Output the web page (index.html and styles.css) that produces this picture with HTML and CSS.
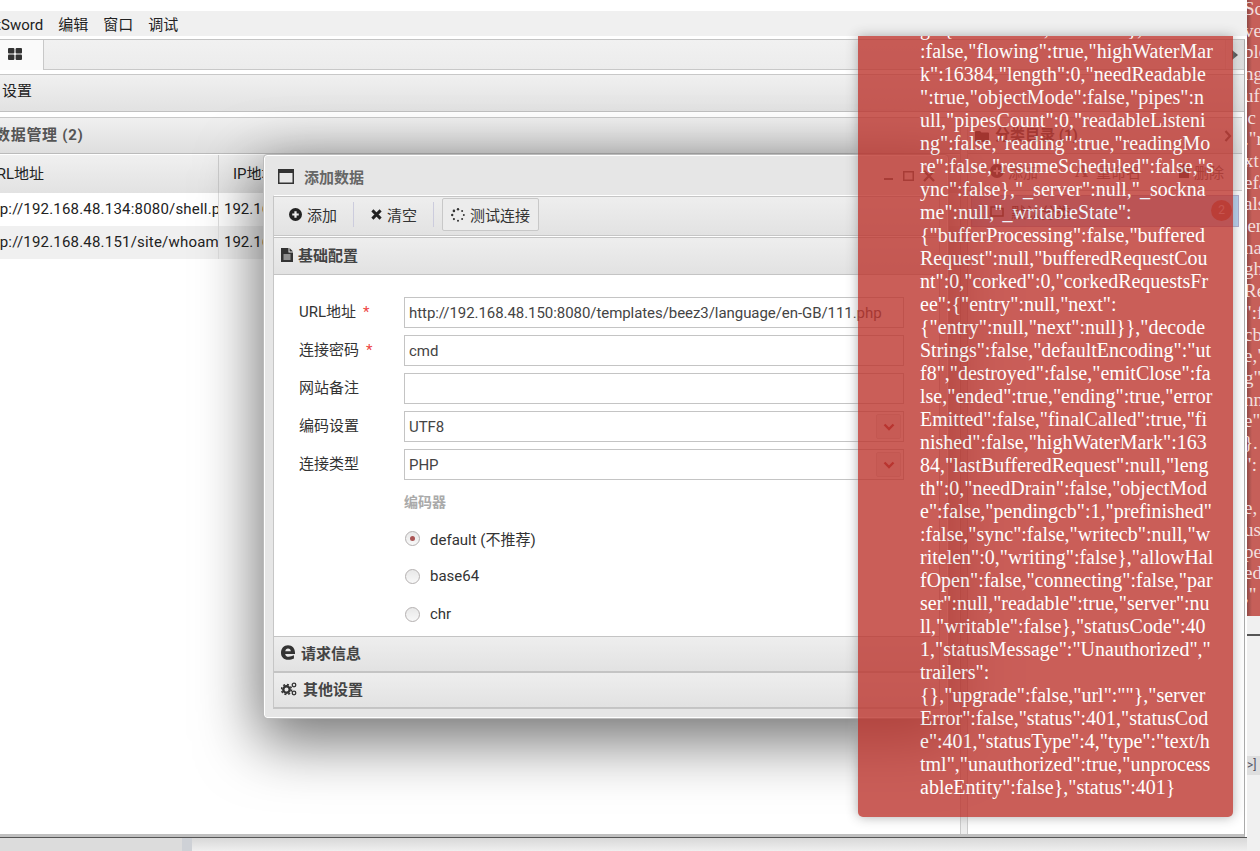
FILE: index.html
```html
<!DOCTYPE html>
<html lang="zh">
<head>
<meta charset="utf-8">
<title>AntSword</title>
<link rel="stylesheet" href="styles.css">
</head>
<body>
<div class="stage">
  <div class="back-toast"><div class="back-text">Sc<br>ve<br>ble<br>ng<br>ufi<br>'c<br>."r<br>xt<br>efa<br>als<br>'en<br>na<br>gh<br>Re<br>":f<br>cb<br>e,"<br>g"<br>nn<br>e"<br>}.<br>":<br><br>e,<br>us<br>pe<br>ed<br>,"</div></div>
  <div class="back-line"></div>
  <div class="back-term">&gt;]</div>
  <div class="task-strip"></div>

  <div class="app">
    <div class="menu"><span>AntSword</span><span>编辑</span><span>窗口</span><span>调试</span></div>
    <div class="frame">
      <div class="tabs">
        <div class="tab">
          <svg class="i-grid" width="14" height="12" viewBox="0 0 14 12"><rect width="6.4" height="5.4" rx="1"/><rect x="7.6" width="6.4" height="5.4" rx="1"/><rect y="6.6" width="6.4" height="5.4" rx="1"/><rect x="7.6" y="6.6" width="6.4" height="5.4" rx="1"/></svg>
        </div>
        <div class="tab-arrow"><i></i></div>
      </div>
      <div class="toolbar main-tools"><span>设置</span></div>
      <div class="panes">
        <div class="pane-left">
          <div class="head head-left">数据管理 (2)</div>
          <div class="grid">
            <div class="row row-head"><div class="c1">URL地址</div><div class="c2">IP地址</div></div>
            <div class="row"><div class="c1">http://192.168.48.134:8080/shell.php</div><div class="c2">192.168.48.134</div></div>
            <div class="row row-alt"><div class="c1">http://192.168.48.151/site/whoami.php</div><div class="c2">192.168.48.151</div></div>
          </div>
        </div>
        <div class="splitter"></div>
        <div class="pane-right">
          <div class="head head-right">
            <svg width="14" height="12" viewBox="0 0 14 12"><path d="M0 2a1 1 0 0 1 1-1h4l1.500 1.500H13a1 1 0 0 1 1 1V11a1 1 0 0 1-1 1H1a1 1 0 0 1-1-1z"/></svg>
            <span>分类目录 (1)</span>
            <svg class="chev" width="8" height="12" viewBox="0 0 8 12"><path d="M1.500 1l4.500 5-4.500 5" fill="none" stroke="currentColor" stroke-width="2.200"/></svg>
          </div>
          <div class="cat-tools">
            <span class="ct"><svg width="14" height="14" viewBox="0 0 14 14"><circle cx="7" cy="7" r="7"/><path d="M7 3.500v7M3.500 7h7" stroke="#eee" stroke-width="2"/></svg>添加</span>
            <span class="ct"><b class="ct-a">A</b>重命名</span>
            <span class="ct"><svg width="12" height="14" viewBox="0 0 12 14"><path d="M0 2h12v1.500H0zM4 0h4v2H4zM1 4h10v10H1z"/></svg>删除</span>
          </div>
          <div class="cat-row">
            <svg width="14" height="12" viewBox="0 0 14 12"><path d="M1 2h4l1.500 1.500H13V11H1z" fill="none" stroke="currentColor" stroke-width="1.500"/></svg>
            <span>默认分类</span>
            <em class="badge">2</em>
          </div>
        </div>
      </div>
    </div>
  </div>

  <div class="dialog">
    <div class="dlg-title">
      <svg width="16" height="15" viewBox="0 0 16 15"><path d="M0 0h16v15H0z" fill="#333"/><path d="M1.500 4h13v9.500h-13z" fill="#e8e8e8"/></svg>
      <span class="dlg-name">添加数据</span>
      <span class="win-btns">
        <svg width="10" height="10" viewBox="0 0 10 10"><path d="M0 7h9v2H0z"/></svg>
        <svg width="11" height="10" viewBox="0 0 11 10"><path d="M.75.75h9.500v8.500H.75z" fill="none" stroke="currentColor" stroke-width="1.500"/></svg>
        <svg width="12" height="12" viewBox="0 0 12 12"><path d="M1 1l10 10M11 1L1 11" stroke="currentColor" stroke-width="2.400"/></svg>
      </span>
    </div>
    <div class="dlg-body">
      <div class="dlg-tools">
        <span class="tbtn"><svg width="13" height="13" viewBox="0 0 14 14"><circle cx="7" cy="7" r="7" fill="#222"/><path d="M7 3.500v7M3.500 7h7" stroke="#eee" stroke-width="2.400"/></svg>添加</span>
        <i class="sep"></i>
        <span class="tbtn"><svg width="11" height="11" viewBox="0 0 12 12"><path d="M1.500 1.500l9 9M10.500 1.500l-9 9" stroke="#222" stroke-width="3.200"/></svg>清空</span>
        <i class="sep"></i>
        <span class="tbtn tbtn-box"><svg width="14" height="14" viewBox="0 0 14 14" fill="#333"><circle cx="7" cy="1.200" r="1.200"/><circle cx="11.100" cy="2.900" r="1"/><circle cx="12.800" cy="7" r="1"/><circle cx="11.100" cy="11.100" r="1"/><circle cx="7" cy="12.800" r="1"/><circle cx="2.900" cy="11.100" r="1.100"/><circle cx="1.200" cy="7" r="1.200"/><circle cx="2.900" cy="2.900" r="1.300"/></svg>测试连接</span>
      </div>
      <div class="acc-head acc-first">
        <svg width="12" height="14" viewBox="0 0 12 14"><path d="M0 0h7.500v4.500H12V14H0z" fill="#333"/><path d="M8.500 0L12 3.500H8.500z" fill="#333"/><path d="M2.500 7h7M2.500 9h7M2.500 11h7" stroke="#eee"/></svg>
        <span>基础配置</span>
      </div>
      <div class="form">
        <div class="frow"><label>URL地址<em>*</em></label><div class="field"><input type="text" value="http://192.168.48.150:8080/templates/beez3/language/en-GB/111.php"></div></div>
        <div class="frow"><label>连接密码<em>*</em></label><div class="field"><input type="text" value="cmd"></div></div>
        <div class="frow"><label>网站备注</label><div class="field"><input type="text" value=""></div></div>
        <div class="frow"><label>编码设置</label><div class="field"><input type="text" value="UTF8"><span class="drop"><svg width="12" height="8" viewBox="0 0 12 8"><path d="M1.500 1.500L6 6l4.500-4.500" fill="none" stroke="#a33" stroke-width="2.400"/></svg></span></div></div>
        <div class="frow"><label>连接类型</label><div class="field"><input type="text" value="PHP"><span class="drop"><svg width="12" height="8" viewBox="0 0 12 8"><path d="M1.500 1.500L6 6l4.500-4.500" fill="none" stroke="#a33" stroke-width="2.400"/></svg></span></div></div>
        <div class="enc-title">编码器</div>
        <div class="radio radio-on"><i></i>default (不推荐)</div>
        <div class="radio"><i></i>base64</div>
        <div class="radio"><i></i>chr</div>
      </div>
      <div class="acc-head">
        <svg width="14" height="15" viewBox="1 1 12 12.500"><path d="M1 7.500C1 3.500 3.500 1 7 1c3.700 0 6 2.500 6 6.500v1H4.600c.2 1.600 1.200 2.400 2.900 2.400 1.500 0 3-.4 4.600-1.200v2.700c-1.500.7-3 1.100-4.900 1.100C3.300 13.500 1 11.200 1 7.500zm3.700-1.400h4.700C9.300 4.700 8.400 3.800 7 3.800c-1.300 0-2.100.9-2.300 2.300z" fill="#333"/></svg>
        <span>请求信息</span>
      </div>
      <div class="acc-head">
        <svg width="16" height="14" viewBox="0 0 16 14"><circle cx="5.500" cy="7.500" r="3.200" fill="none" stroke="#333" stroke-width="2.400"/><circle cx="5.500" cy="7.500" r="5" fill="none" stroke="#333" stroke-width="1.600" stroke-dasharray="2 1.900"/><circle cx="13" cy="3" r="1.800" fill="none" stroke="#333" stroke-width="1.300"/><circle cx="13" cy="11" r="1.800" fill="none" stroke="#333" stroke-width="1.300"/></svg>
        <span>其他设置</span>
      </div>
    </div>
  </div>

  <div class="toast"><div class="toast-msg">g":{"head":null,"tail":null},<br>:false,"flowing":true,"highWaterMar<br>k":16384,"length":0,"needReadable<br>":true,"objectMode":false,"pipes":n<br>ull,"pipesCount":0,"readableListeni<br>ng":false,"reading":true,"readingMo<br>re":false,"resumeScheduled":false,"s<br>ync":false},"_server":null,"_sockna<br>me":null,"_writableState":<br>{"bufferProcessing":false,"buffered<br>Request":null,"bufferedRequestCou<br>nt":0,"corked":0,"corkedRequestsFr<br>ee":{"entry":null,"next":<br>{"entry":null,"next":null}},"decode<br>Strings":false,"defaultEncoding":"ut<br>f8","destroyed":false,"emitClose":fa<br>lse,"ended":true,"ending":true,"error<br>Emitted":false,"finalCalled":true,"fi<br>nished":false,"highWaterMark":163<br>84,"lastBufferedRequest":null,"leng<br>th":0,"needDrain":false,"objectMod<br>e":false,"pendingcb":1,"prefinished"<br>:false,"sync":false,"writecb":null,"w<br>ritelen":0,"writing":false},"allowHal<br>fOpen":false,"connecting":false,"par<br>ser":null,"readable":true,"server":nu<br>ll,"writable":false},"statusCode":40<br>1,"statusMessage":"Unauthorized","<br>trailers":<br>{},"upgrade":false,"url":""},"server<br>Error":false,"status":401,"statusCod<br>e":401,"statusType":4,"type":"text/h<br>tml","unauthorized":true,"unprocess<br>ableEntity":false},"status":401}</div></div>
</div>
</body>
</html>
```

FILE: styles.css
```css
* { box-sizing: border-box; }
html, body { margin: 0; height: 100%; overflow: hidden; }
body {
  background: #f0f0f0;
  font-family: Roboto, "Noto Sans CJK SC", sans-serif;
  font-size: 15px;
  color: #222;
}
.stage { position: relative; width: 1260px; height: 851px; overflow: hidden; }

/* what lies behind the main window */
.back-toast {
  position: absolute; left: 1247px; top: 0; width: 13px; height: 616px;
  background: linear-gradient(90deg, #8f4a46, #c65f59 5px);
  color: #f3dedd;
  white-space: nowrap; overflow: hidden;
}
.back-text { margin: -2px 0 0 -3px; font: 19px/21.7px "Liberation Serif", serif; }
.back-line { position: absolute; left: 1247px; top: 634px; width: 13px; height: 2px; background: #555; }
.back-term {
  position: absolute; left: 1247px; top: 756px; width: 13px; height: 19px;
  background: #dedede; color: #556; font-size: 12px; line-height: 19px; white-space: nowrap;
}
.task-strip {
  position: absolute; left: 0; top: 838px; width: 1247px; height: 13px;
  background: linear-gradient(#d8d8d8, #efefef);
}
.task-strip::before {
  content: ""; position: absolute; left: 0; top: 0; width: 192px; height: 13px;
  background: linear-gradient(90deg, #dcdcdc 182px, #ced1d6 182px);
}

/* main window */
.app {
  position: absolute; left: -30px; top: 0; width: 1277px; height: 838px;
  display: flex; flex-direction: column;
  background: #fff;
  padding-top: 11px;
  border-bottom: 1px solid #555;
}
.menu {
  height: 25px; flex: none; background: #f0f0f0;
  display: flex; gap: 15px; padding-left: 8px; line-height: 28px; font-size: 15px; color: #222;
}
.frame {
  flex: 1; min-height: 0; margin: 3px 2px 0 0;
  border-top: 1px solid #c4c4c4; border-right: 1px solid #aaa; border-bottom: 3px solid #c0c0c0;
  display: flex; flex-direction: column; background: #fff;
}
.tabs {
  height: 30px; flex: none; display: flex;
  background: linear-gradient(#f1f1f1, #ececec);
  border-bottom: 1px solid #c8c8c8;
}
.tab {
  width: 74px; height: 30px; background: #fafafa; border-right: 1px solid #c8c8c8;
  padding: 8px 0 0 38px;
}
.i-grid { display: block; fill: #333; }
.tab-arrow {
  margin-left: auto; width: 19px; height: 29px;
  background: linear-gradient(90deg, #f0f0f0, #ddd);
  border-left: 1px solid #ddd;
  display: flex; align-items: center; justify-content: center;
}
.tab-arrow i { border-left: 6px solid #444; border-top: 5px solid transparent; border-bottom: 5px solid transparent; }
.toolbar {
  height: 38px; flex: none; margin-top: 4px;
  background: linear-gradient(#f0f0f0, #e2e2e2);
  border-top: 1px solid #c8c8c8; border-bottom: 1px solid #c0c0c0;
  padding-left: 32px; line-height: 33px; color: #222;
}
.panes { flex: 1; min-height: 0; display: flex; margin-top: 5px; }
.pane-left { width: 990px; flex: none; background: #fff; }
.splitter { width: 8px; flex: none; background: #eee; border-left: 1px solid #ccc; border-right: 1px solid #ccc; }
.pane-right { flex: 1; min-width: 0; border-right: 2px solid #fff; }
.head {
  height: 37px; flex: none;
  background: linear-gradient(#f0f0f0, #dedede);
  border-top: 1px solid #c8c8c8; border-bottom: 1px solid #bbb;
  font-weight: 700; color: #555; line-height: 35px;
}
.head-left { padding-left: 25px; letter-spacing: .7px; }
.grid { font-size: 15px; }
.row { display: flex; height: 33px; line-height: 33px; background: #fff; }
.row-head { height: 38px; line-height: 38px; background: linear-gradient(#f0f0f0, #e2e2e2); margin-top: 1px; }
.row-alt { background: #f0f0f0; }
.c1 { width: 249px; padding-left: 11px; white-space: nowrap; overflow: hidden; border-right: 1px solid #e0e0e0; flex: none; letter-spacing: .2px; }
.c2 { padding-left: 5px; flex: 1; white-space: nowrap; }
.row-head .c1 { padding-left: 17px; border-right: 1px solid #ccc; letter-spacing: 0; }
.row-head .c2 { padding-left: 14px; }

.head-right { display: flex; align-items: center; gap: 6px; padding-left: 7px; color: #444; fill: #333; }
.head-right .chev { margin-left: auto; margin-right: 10px; color: #555; }
.cat-tools { height: 37px; display: flex; align-items: center; color: #666; fill: #444; padding: 0 0 2px 22px; font-size: 15px; background: #eee; border-bottom: 1px solid #ccc; }
.ct { display: inline-flex; align-items: center; gap: 4px; margin-right: 37px; white-space: nowrap; }
.ct-a { font: 700 18px "Liberation Serif", serif; margin-right: 4px; }
.cat-row {
  height: 32px; margin: 4px 3px 0 3px; display: flex; align-items: center; gap: 7px; padding-left: 18px;
  background: #b3d0f2; border: 1px solid #aac; color: #333; position: relative;
}
.badge {
  position: absolute; right: 6px; top: 4px; width: 21px; height: 21px; border-radius: 50%;
  background: #b5605c; color: #f0d0d0; font-style: normal; font-size: 12px; line-height: 21px; text-align: center;
}

/* dialog */
.dialog {
  position: absolute; left: 264px; top: 155px; width: 684px; height: 563px;
  background: #e6e6e6;
  border: 1px solid #fff; border-radius: 3px;
  box-shadow: 0 18px 60px 6px rgba(0,0,0,.55);
  outline: 1px solid #bbb;
  display: flex; flex-direction: column;
}
.dlg-title { height: 39px; flex: none; display: flex; align-items: center; padding: 1px 0 0 13px; }
.dlg-name { font-weight: 700; color: #666; margin-left: 10px; font-size: 15px; }
.win-btns { margin-left: auto; margin-right: 12px; display: flex; align-items: center; gap: 9px; color: #555; fill: #555; }
.dlg-body { flex: 1; min-height: 0; margin: 0 7px 8px 8px; border: 1px solid #c6c6c6; border-top: 1px solid #fff; display: flex; flex-direction: column; background: #fff; }
.dlg-tools {
  height: 40px; flex: none; display: flex; align-items: center; padding: 0 0 3px 15px;
  background: linear-gradient(#eee, #e2e2e2); border: 1px solid #c6c6c6; border-width: 1px 0;
  color: #333;
}
.tbtn { display: inline-flex; align-items: center; gap: 5px; white-space: nowrap; }
.tbtn svg { flex: none; }
.sep { width: 1px; height: 25px; background: #ccd; margin: 0 17px 0 16px; }
.tbtn-box { margin-left: -9px; height: 33px; padding: 0 8px; border: 1px solid #c8c8c8; border-radius: 2px; background: #ececec; }
.acc-head {
  height: 36px; flex: none; display: flex; align-items: center; gap: 6px; padding: 0 0 3px 7px;
  background: linear-gradient(#eee, #e2e2e2);
  border-top: 1px solid #c4c4c4; border-bottom: 1px solid #c4c4c4;
  font-weight: 700; color: #444; font-size: 15px;
}
.acc-first { margin-top: 1px; height: 38px; gap: 5px; }
.form { flex: 1; min-height: 0; padding: 22px 0 0 25px; background: #fff; overflow: hidden; }
.frow { display: flex; height: 31px; margin-bottom: 7px; }
.frow label { width: 105px; flex: none; line-height: 30px; color: #333; font-size: 15px; }
.frow em { color: #e44; font-style: normal; margin-left: 7px; }
.field { width: 500px; position: relative; }
.field input {
  width: 100%; height: 31px; padding: 1px 4px 0; border: 1px solid #c4c4c4; outline: 0;
  background: #fff; color: #444; font: 15px Roboto, "Noto Sans CJK SC", sans-serif; letter-spacing: -.06px;
}
.drop {
  position: absolute; right: 3px; top: 3px; width: 25px; height: 25px;
  border: 1px solid #ddd; border-radius: 2px; background: #f2f2f2;
  display: flex; align-items: center; justify-content: center;
}
.enc-title { margin: 13px 0 0 105px; height: 26px; font-weight: 700; color: #aaa; font-size: 14px; line-height: 18px; }
.radio { margin: 0 0 0 106px; height: 38px; display: flex; align-items: center; gap: 10px; font-size: 15px; color: #333; }
.radio i {
  width: 15px; height: 15px; border-radius: 50%; flex: none;
  border: 1px solid #b4b0b0; background: linear-gradient(#e8e8e8, #f8f8f8);
  display: flex; align-items: center; justify-content: center;
}
.radio-on i::after { content: ""; width: 5px; height: 5px; border-radius: 50%; background: #a55; }

/* error toast */
.toast {
  position: absolute; left: 858px; top: 36px; width: 375px; height: 781px;
  display: flex; flex-direction: column; justify-content: flex-end;
  overflow: hidden;
  padding: 0 15px 18px 62px;
  background: #bd362f; color: #fff;
  opacity: .8;
  border-radius: 0 0 5px 5px;
  box-shadow: 0 0 12px #999;
}
.toast-msg { flex: none; font: 20px/23px "Liberation Serif", serif; white-space: nowrap; }
```
